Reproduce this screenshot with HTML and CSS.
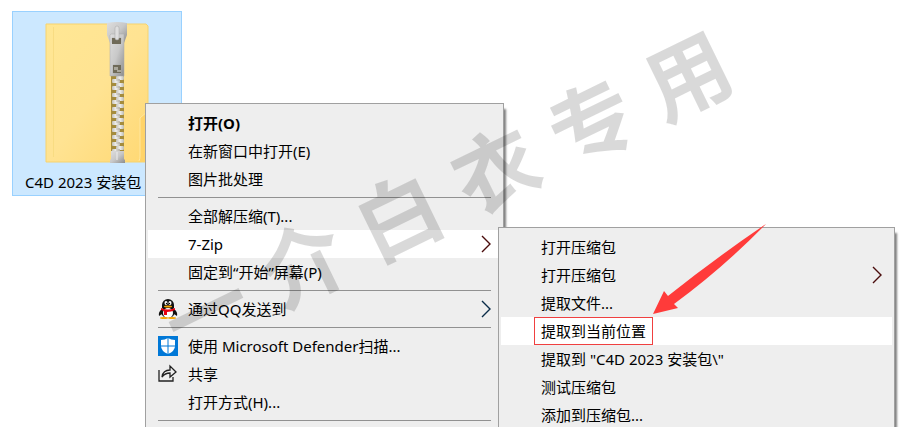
FILE: index.html
```html
<!DOCTYPE html>
<html lang="zh-CN">
<head>
  <meta charset="UTF-8">
  <meta name="viewport" content="width=device-width, initial-scale=1.0">
  <link rel="stylesheet" href="styles.css">
  <title>C4D 2023 安装包</title>
</head>
<body>
  <main class="desktop">
    <div class="file">
      <svg class="file-icon" viewBox="0 0 104 141" aria-hidden="true">
        <defs>
          <linearGradient id="folder" x1="0" y1="0" x2="1" y2="1">
            <stop offset="0" stop-color="#ffe794"/>
            <stop offset="0.5" stop-color="#ffe392"/>
            <stop offset="1" stop-color="#ffd873"/>
          </linearGradient>
          <linearGradient id="metal" x1="0" y1="0" x2="1" y2="1">
            <stop offset="0" stop-color="#dedede"/>
            <stop offset="0.5" stop-color="#c8c8c8"/>
            <stop offset="1" stop-color="#8c8c8c"/>
          </linearGradient>
          <linearGradient id="tooth" x1="0" y1="0" x2="1" y2="0">
            <stop offset="0" stop-color="#c4c1b8"/>
            <stop offset="0.5" stop-color="#f0f0ee"/>
            <stop offset="1" stop-color="#bdbab0"/>
          </linearGradient>
          <pattern id="teeth" x="66" y="54" width="13" height="7" patternUnits="userSpaceOnUse">
            <rect width="13" height="7" fill="#a58c3c"/>
            <rect x="5" y="0" width="8" height="4" rx="1" fill="url(#tooth)"/>
            <rect x="1" y="3" width="8" height="4" rx="1" fill="url(#tooth)"/>
            <path d="M5 4h4" stroke="#8f8b7c" stroke-width="0.5"/>
          </pattern>
        </defs>
        <path d="M1 2H101l2 2V140H1z" fill="url(#folder)" stroke="#f7d36f"/>
        <path d="M8.5 5V135" stroke="#f8dc82"/>
        <path d="M94 140q1-2 1-6V96l8-7V140z" fill="#ffd368"/>
        <path d="M94 139q1-2 1-5V96l8-7" fill="none" stroke="#ffe7a0"/>
        <rect x="66" y="50" width="13" height="80" fill="url(#teeth)"/>
        <path d="M66 129h13v8l1 1v3H65v-3l1-1z" fill="url(#metal)"/>
        <path d="M72 130v8" stroke="#eeeeee"/>
        <path d="M62 1q10-2 20 0v12l-3 8H65l-3-8z" fill="url(#metal)"/>
        <path fill-rule="evenodd" d="M66 12h13v42H65V13zM67 16v5h9v-5zM68 43v8h8v-8z" fill="url(#metal)" stroke="#a8a8a8" stroke-width="0.5"/>
        <path d="M67 16h9v6h-9zM68 43h8v8h-8z" fill="#6f6a58"/>
        <path d="M69 45h4v3h-4zM72 48h4v2h-4z" fill="#aaa79b"/>
        <rect x="70" y="4" width="4" height="14" rx="2" fill="#dedede" stroke="#a6a6a6" stroke-width="0.5"/>
      </svg>
      <span class="file-name">C4D 2023 安装包</span>
    </div>

    <div class="menu context-menu">
      <button class="item default">打开(O)</button>
      <button class="item">在新窗口中打开(E)</button>
      <button class="item">图片批处理</button>
      <hr>
      <button class="item">全部解压缩(T)...</button>
      <button class="item active">7-Zip
        <svg class="chevron warm" viewBox="0 0 10 18" aria-hidden="true"><path d="M1 1l8 8-8 8"/></svg>
      </button>
      <button class="item">固定到“开始”屏幕(P)</button>
      <hr>
      <button class="item">
        <svg class="icon" viewBox="0 0 20 20" aria-hidden="true">
          <path d="M4 10Q0 13 1 17l3-2zM16 10q4 3 3 7l-3-2z" fill="#111111"/>
          <ellipse cx="10" cy="13" rx="7" ry="6" fill="#111111"/>
          <ellipse cx="10" cy="14" rx="5" ry="5" fill="#ffffff"/>
          <ellipse cx="6" cy="19" rx="4" ry="1" fill="#f6a500"/>
          <ellipse cx="14" cy="19" rx="4" ry="1" fill="#f6a500"/>
          <path d="M4 9V6a6 6 0 0 1 12 0v3z" fill="#111111"/>
          <ellipse cx="8" cy="4" rx="1.5" ry="2" fill="#ffffff"/>
          <ellipse cx="12" cy="4" rx="1.5" ry="2" fill="#ffffff"/>
          <circle cx="8.5" cy="4.5" r="0.7"/>
          <circle cx="11.5" cy="4.5" r="0.7"/>
          <ellipse cx="10" cy="7.5" rx="4" ry="1" fill="#f6a500"/>
          <path d="M3 9q7 3 14 0v2q-4 2-8 2v3H6v-4l-3-1z" fill="#e60012"/>
        </svg>
        通过QQ发送到
        <svg class="chevron cool" viewBox="0 0 10 18" aria-hidden="true"><path d="M1 1l8 8-8 8"/></svg>
      </button>
      <hr>
      <button class="item">
        <svg class="icon" viewBox="0 0 20 20" aria-hidden="true">
          <rect width="20" height="20" fill="#0078d7"/>
          <path d="M10 2q3 2 7 2v6q0 5-7 8-7-3-7-8V4q4 0 7-2z" fill="#ffffff"/>
          <path d="M10 2v16M3 10h14" stroke="#0078d7"/>
        </svg>
        使用 Microsoft Defender扫描...
      </button>
      <button class="item">
        <svg class="icon" viewBox="0 0 20 20" aria-hidden="true">
          <path d="M1 6v11h14v-4" fill="none" stroke="#222222" stroke-width="1.3"/>
          <path d="M4 13q1-7 8-7V2l6 6-6 5V9q-5 0-8 4z" fill="none" stroke="#222222" stroke-width="1.3"/>
        </svg>
        共享
      </button>
      <button class="item">打开方式(H)...</button>
      <hr>
    </div>

    <div class="menu sub-menu">
      <button class="item">打开压缩包</button>
      <button class="item">打开压缩包
        <svg class="chevron warm" viewBox="0 0 10 18" aria-hidden="true"><path d="M1 1l8 8-8 8"/></svg>
      </button>
      <button class="item">提取文件...</button>
      <button class="item active"><span class="marked">提取到当前位置</span></button>
      <button class="item">提取到 "C4D 2023 安装包\"</button>
      <button class="item">测试压缩包</button>
      <button class="item">添加到压缩包...</button>
    </div>

    <svg class="arrow" viewBox="0 0 114 91" aria-hidden="true">
      <path d="M0 90L11 67l4 5Q60 36 113 0 70 44 21 80l4 4z" fill="#ff3b3a"/>
    </svg>

    <div class="watermark">
      <span>一</span><span>介</span><span>白</span><span>衣</span><span>专</span><span>用</span>
    </div>
  </main>
</body>
</html>
```
FILE: styles.css
```css
* {
  box-sizing: border-box;
}

body {
  margin: 0;
  background-color: #fff;
  color: #000;
  font-family: "Noto Sans", "Noto Sans CJK SC", sans-serif;
  font-size: 15px;
  line-height: 20px;
}

.desktop {
  position: relative;
  height: 100vh;
  padding: 11px 12px;
  overflow: hidden;
}

.file {
  display: flex;
  flex-direction: column;
  gap: 9px;
  width: 170px;
  padding: 10px 12px 3px;
  border: 1px solid #99d1ff;
  background-color: #cce8ff;
}

.file-icon {
  align-self: center;
  width: 104px;
  height: 141px;
}

.file-name {
  white-space: nowrap;
}

.menu {
  position: absolute;
  display: flex;
  flex-direction: column;
  padding: 5px 2px;
  border: 1px solid #a0a0a0;
  background-color: #eee;
  box-shadow: 3px 5px 2px -1px rgba(0, 0, 0, 0.5);
}

.context-menu {
  top: 103px;
  left: 145px;
  width: 359px;
}

.sub-menu {
  top: 227px;
  left: 498px;
  width: 397px;
}

.menu hr {
  width: 333px;
  height: 1px;
  margin: 4px 10px;
  border: none;
  background-color: #919191;
}

.item {
  position: relative;
  display: flex;
  align-items: center;
  height: 28px;
  padding: 0 10px 0 40px;
  border: none;
  background: none;
  color: inherit;
  font: inherit;
  text-align: left;
  white-space: nowrap;
}

.item:hover,
.active {
  background-color: #fff;
}

.default {
  font-weight: bold;
}

.icon {
  position: absolute;
  top: 4px;
  left: 10px;
  width: 20px;
  height: 20px;
}

.chevron {
  width: 10px;
  height: 18px;
  margin-left: auto;
  fill: none;
  stroke-width: 1.4;
}

.warm {
  stroke: #4a0c0c;
}

.cool {
  stroke: #0a2c48;
}

.marked {
  height: 28px;
  margin-left: -7px;
  padding: 3px 6px;
  border: 1px solid #f04040;
}

.arrow {
  position: absolute;
  top: 224px;
  left: 653px;
  width: 114px;
  height: 91px;
}

.watermark {
  position: absolute;
  top: 143px;
  left: 137px;
  display: flex;
  justify-content: space-between;
  width: 620px;
  color: rgba(0, 0, 0, 0.15);
  font-size: 84px;
  font-weight: bold;
  line-height: 100px;
  transform: rotate(-26deg);
  pointer-events: none;
}
```
